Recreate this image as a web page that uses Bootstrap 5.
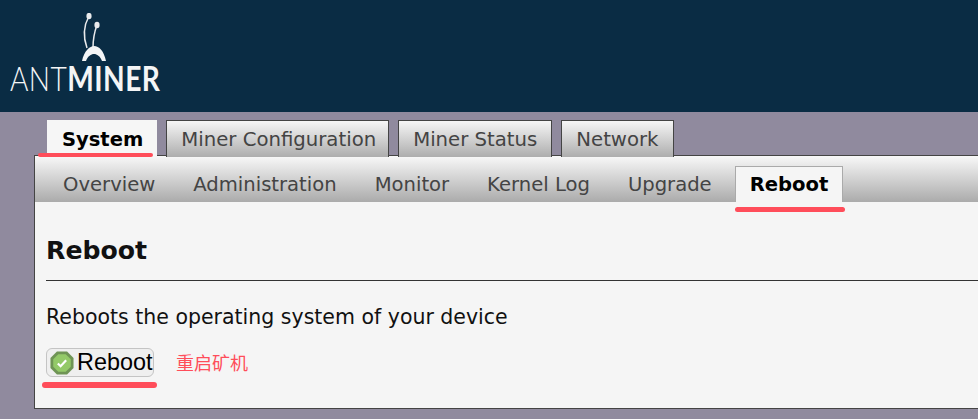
<!DOCTYPE html>
<html lang="en">
<head>
    <meta charset="UTF-8">
    <meta name="viewport" content="width=device-width, initial-scale=1.0">
    <title>Reboot</title>
    <link href="https://cdn.jsdelivr.net/npm/bootstrap@5.3.0/dist/css/bootstrap.min.css" rel="stylesheet">
    <style>
        body {
            background-color: #908a9e;
            font-family: "DejaVu Sans", sans-serif;
            font-size: 19.7px;
            overflow: hidden;
            height: 419px;
            position: relative;
        }
        .top-head {
            background: #0a2c44;
            height: 112px;
            padding-top: 13px;
            padding-left: 10px;
        }
        .logo-art {
            display: block;
            margin-left: 62px;
        }
        .logo-word {
            font-family: Lato, sans-serif;
            font-size: 33.5px;
            line-height: 30px;
            color: #f4f5f6;
            letter-spacing: 0.5px;
            white-space: nowrap;
            transform: scaleX(.84);
            transform-origin: left center;
        }
        .logo-word span { font-weight: 300; }
        .logo-word b { font-weight: 700; }
        .main-tabs {
            display: flex;
            gap: 9px;
            padding: 8px 0 0 47px;
            height: 44px;
            margin-bottom: -1px;
            position: relative;
        }
        .main-tab {
            height: 37px;
            padding: 4px 12px 0 14px;
            line-height: 30px;
            color: #444;
            border: 1px solid #444;
            border-bottom: 0;
            background: linear-gradient(#f6f6f6, #adadad);
        }
        .main-tab.tab-wide { padding-right: 14px; }
        .main-tab.on {
            height: 37px;
            padding: 5px 14px 0 15px;
            font-size: 19.5px;
            color: #000;
            font-weight: 700;
            border: 0;
            background: #f6f6f6;
            position: relative;
            z-index: 1;
        }
        .sheet {
            margin-left: 34px;
            height: 254px;
            margin-top: -1px;
            background: #f5f5f5;
            border: 1px solid #444;
            border-right: 0;
        }
        .sub-tabs {
            display: flex;
            gap: 8px;
            height: 46px;
            padding: 10px 0 0 13px;
            background: linear-gradient(#f8f8f8, #ababab);
        }
        .sub-tab {
            padding: 2px 15px 0;
            font-size: 19.6px;
            line-height: 34px;
            color: #444;
            white-space: nowrap;
        }
        .sub-tab.on {
            color: #000;
            font-weight: 700;
            background: #f5f5f5;
            border: 1px solid #aaa;
            border-bottom: 0;
            padding: 1px 14px 0;
            height: 36px;
        }
        .sheet-body { padding: 27px 0 0 11px; }
        .page-title {
            font-family: "DejaVu Sans", sans-serif;
            font-size: 25.2px;
            font-weight: 700;
            line-height: 44px;
            color: #111;
            margin: 0;
            padding-bottom: 7px;
            border-bottom: 1px solid #333;
        }
        .page-desc {
            margin: 21px 0 0;
            font-size: 20.5px;
            line-height: 30px;
            color: #111;
        }
        .action-row {
            display: flex;
            align-items: center;
            margin-top: 16px;
        }
        .go-btn {
            display: flex;
            align-items: center;
            gap: 3px;
            width: 108px;
            height: 29px;
            padding: 0 0 0 3px;
            font-family: "Liberation Sans", sans-serif;
            font-size: 23.4px;
            color: #000;
            background: #efefef;
            border: 1px solid #c4c4c4;
            border-radius: 6px;
        }
        .note-cn {
            margin-left: 22px;
            font-family: "Noto Sans CJK SC", sans-serif;
            font-size: 18px;
            color: #ff4d5a;
        }
        .scribble {
            position: absolute;
            height: 4px;
            background: #ff4d5a;
            border-radius: 3px;
            z-index: 2;
        }
        .s1 { left: 38px; top: 153px; width: 115px; }
        .s2 { left: 735px; top: 207px; width: 110px; height: 5px; }
        .s3 { left: 42px; top: 382px; width: 115px; height: 6px; }
    </style>
</head>
<body>
    <div class="top-head">
        <svg class="logo-art" width="36" height="50" viewBox="0 0 36 50">
            <path d="M17 3C11 14 11 24 15 35M25 12C22 20 21 28 21 35" fill="none" stroke="#e9eaec" stroke-width="1.5"/>
            <ellipse cx="17" cy="3" rx="2.6" ry="3.2" fill="#e9eaec"/>
            <ellipse cx="25" cy="12" rx="2.6" ry="3.2" fill="#e9eaec"/>
            <path d="M10 48C12 38 18 33 22 33C27 33 32 38 34 48H30C28 43 25 41 22 41C19 41 16 43 14 48Z" fill="#f4f5f6"/>
        </svg>
        <div class="logo-word"><span>ANT</span><b>MINER</b></div>
    </div>

    <div class="main-tabs">
        <div class="main-tab on">System</div>
        <div class="main-tab">Miner Configuration</div>
        <div class="main-tab tab-wide">Miner Status</div>
        <div class="main-tab tab-wide">Network</div>
    </div>

    <div class="sheet">
        <div class="sub-tabs">
            <div class="sub-tab">Overview</div>
            <div class="sub-tab">Administration</div>
            <div class="sub-tab">Monitor</div>
            <div class="sub-tab">Kernel Log</div>
            <div class="sub-tab">Upgrade</div>
            <div class="sub-tab on">Reboot</div>
        </div>
        <div class="sheet-body">
            <h2 class="page-title">Reboot</h2>
            <p class="page-desc">Reboots the operating system of your device</p>
            <div class="action-row">
                <button type="button" class="go-btn">
                    <svg width="24" height="24" viewBox="0 0 26 26" class="flex-shrink-0">
                        <path d="M7.5 .5H18.5L25.5 7.5V18.5L18.5 25.5H7.5L.5 18.5V7.5Z" fill="#6f9455"/>
                        <path d="M9 3.5H17L22.5 9V17L17 22.5H9L3.5 17V9Z" fill="#93c968"/>
                        <path d="M8.5 13.5L11.5 16.5L17.5 10" fill="none" stroke="#fff" stroke-width="2.4"/>
                    </svg>
                    <span>Reboot</span>
                </button>
                <span class="note-cn">重启矿机</span>
            </div>
        </div>
    </div>

    <div class="scribble s1"></div>
    <div class="scribble s2"></div>
    <div class="scribble s3"></div>

    <script src="https://cdn.jsdelivr.net/npm/bootstrap@5.3.0/dist/js/bootstrap.bundle.min.js"></script>
</body>
</html>
